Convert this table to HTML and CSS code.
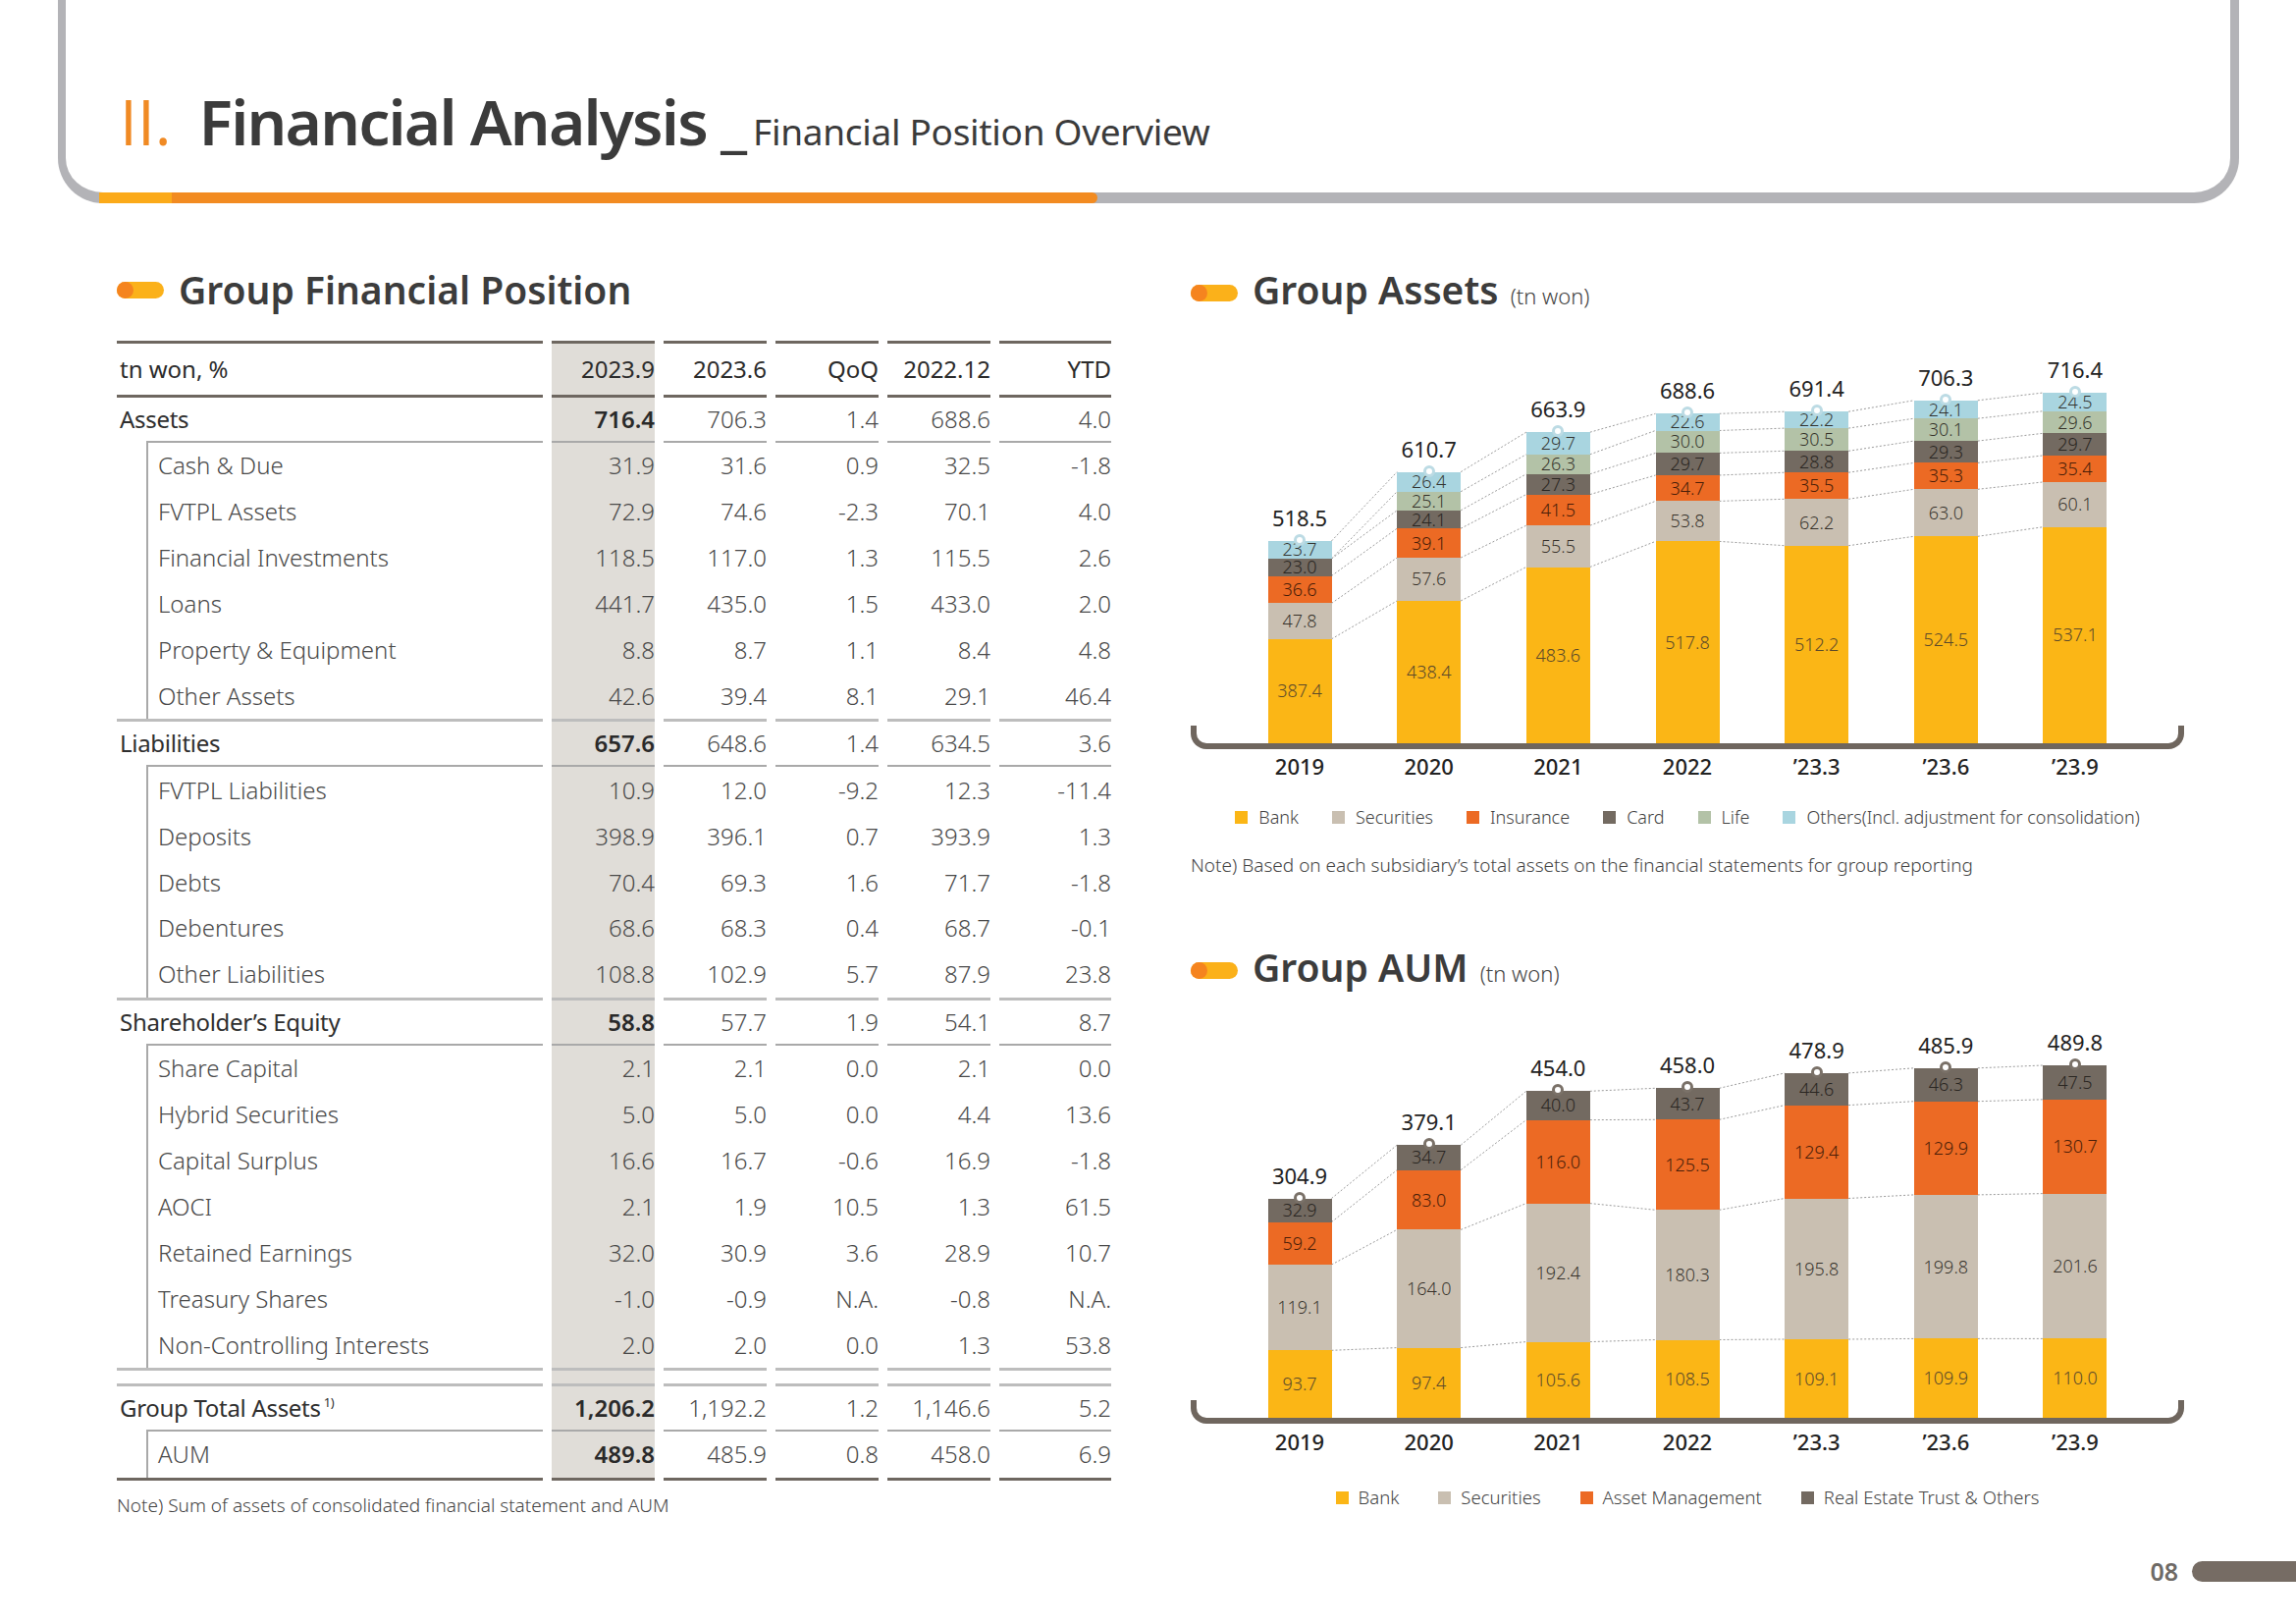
FILE: index.html
```html
<!DOCTYPE html>
<html lang="en">
<head>
<meta charset="utf-8">
<title>Financial Analysis - Financial Position Overview</title>
<link rel="stylesheet" href="styles.css">
</head>
<body>
<header class="frame">
  <h1 class="page-title"><span class="num">II.</span><span class="main">Financial Analysis</span><span class="sep">_</span><span class="sub">Financial Position Overview</span></h1>
  <div class="accent"></div>
</header>

<main class="content">
  <section class="col">
    <h2 class="sec"><span class="pill"></span><span>Group Financial Position</span></h2>
    <table class="fin">
      <colgroup><col class="c-lab"><col class="c-n"><col class="c-n"><col class="c-n"><col class="c-n"><col class="c-last"></colgroup>
      <thead>
        <tr><th class="lab">tn won, %</th><th class="hl">2023.9</th><th>2023.6</th><th>QoQ</th><th>2022.12</th><th>YTD</th></tr>
      </thead>
      <tbody>
        <tr class="major"><td class="lab">Assets</td><td class="hl b">716.4</td><td>706.3</td><td>1.4</td><td>688.6</td><td>4.0</td></tr>
        <tr class="sub first"><td class="lab">Cash &amp; Due</td><td class="hl">31.9</td><td>31.6</td><td>0.9</td><td>32.5</td><td>-1.8</td></tr>
        <tr class="sub"><td class="lab">FVTPL Assets</td><td class="hl">72.9</td><td>74.6</td><td>-2.3</td><td>70.1</td><td>4.0</td></tr>
        <tr class="sub"><td class="lab">Financial Investments</td><td class="hl">118.5</td><td>117.0</td><td>1.3</td><td>115.5</td><td>2.6</td></tr>
        <tr class="sub"><td class="lab">Loans</td><td class="hl">441.7</td><td>435.0</td><td>1.5</td><td>433.0</td><td>2.0</td></tr>
        <tr class="sub"><td class="lab">Property &amp; Equipment</td><td class="hl">8.8</td><td>8.7</td><td>1.1</td><td>8.4</td><td>4.8</td></tr>
        <tr class="sub"><td class="lab">Other Assets</td><td class="hl">42.6</td><td>39.4</td><td>8.1</td><td>29.1</td><td>46.4</td></tr>
        <tr class="major sep"><td class="lab">Liabilities</td><td class="hl b">657.6</td><td>648.6</td><td>1.4</td><td>634.5</td><td>3.6</td></tr>
        <tr class="sub first"><td class="lab">FVTPL Liabilities</td><td class="hl">10.9</td><td>12.0</td><td>-9.2</td><td>12.3</td><td>-11.4</td></tr>
        <tr class="sub"><td class="lab">Deposits</td><td class="hl">398.9</td><td>396.1</td><td>0.7</td><td>393.9</td><td>1.3</td></tr>
        <tr class="sub"><td class="lab">Debts</td><td class="hl">70.4</td><td>69.3</td><td>1.6</td><td>71.7</td><td>-1.8</td></tr>
        <tr class="sub"><td class="lab">Debentures</td><td class="hl">68.6</td><td>68.3</td><td>0.4</td><td>68.7</td><td>-0.1</td></tr>
        <tr class="sub"><td class="lab">Other Liabilities</td><td class="hl">108.8</td><td>102.9</td><td>5.7</td><td>87.9</td><td>23.8</td></tr>
        <tr class="major sep"><td class="lab">Shareholder’s Equity</td><td class="hl b">58.8</td><td>57.7</td><td>1.9</td><td>54.1</td><td>8.7</td></tr>
        <tr class="sub first"><td class="lab">Share Capital</td><td class="hl">2.1</td><td>2.1</td><td>0.0</td><td>2.1</td><td>0.0</td></tr>
        <tr class="sub"><td class="lab">Hybrid Securities</td><td class="hl">5.0</td><td>5.0</td><td>0.0</td><td>4.4</td><td>13.6</td></tr>
        <tr class="sub"><td class="lab">Capital Surplus</td><td class="hl">16.6</td><td>16.7</td><td>-0.6</td><td>16.9</td><td>-1.8</td></tr>
        <tr class="sub"><td class="lab">AOCI</td><td class="hl">2.1</td><td>1.9</td><td>10.5</td><td>1.3</td><td>61.5</td></tr>
        <tr class="sub"><td class="lab">Retained Earnings</td><td class="hl">32.0</td><td>30.9</td><td>3.6</td><td>28.9</td><td>10.7</td></tr>
        <tr class="sub"><td class="lab">Treasury Shares</td><td class="hl">-1.0</td><td>-0.9</td><td>N.A.</td><td>-0.8</td><td>N.A.</td></tr>
        <tr class="sub"><td class="lab">Non-Controlling Interests</td><td class="hl">2.0</td><td>2.0</td><td>0.0</td><td>1.3</td><td>53.8</td></tr>
        <tr class="gap"><td class="lab"></td><td class="hl"></td><td></td><td></td><td></td><td></td></tr>
        <tr class="major"><td class="lab">Group Total Assets<sup>1)</sup></td><td class="hl b">1,206.2</td><td>1,192.2</td><td>1.2</td><td>1,146.6</td><td>5.2</td></tr>
        <tr class="sub first last"><td class="lab">AUM</td><td class="hl b">489.8</td><td>485.9</td><td>0.8</td><td>458.0</td><td>6.9</td></tr>
      </tbody>
    </table>
    <p class="note">Note) Sum of assets of consolidated financial statement and AUM</p>
  </section>

  <section class="col">
    <h2 class="sec"><span class="pill"></span><span>Group Assets <small>(tn won)</small></span></h2>
    <div class="plot assets">
      <svg class="links" viewBox="0 0 1012 420" width="1012" height="420" aria-hidden="true">
        <path d="M143.5 313.8L210.2 274.9M143.5 277.4L210.2 231M143.5 249.5L210.2 201.2M143.5 232L210.2 182.8M143.5 232L210.2 163.7M143.5 213.9L210.2 143.6
                 M275.2 274.9L341.8 240.5M275.2 231L341.8 198.2M275.2 201.2L341.8 166.6M275.2 182.8L341.8 145.8M275.2 163.7L341.8 125.8M275.2 143.6L341.8 103.2
                 M406.8 240.5L473.5 214.4M406.8 198.2L473.5 173.4M406.8 166.6L473.5 147M406.8 145.8L473.5 124.4M406.8 125.8L473.5 101.5M406.8 103.2L473.5 84.3
                 M538.5 214.4L605.2 218.7M538.5 173.4L605.2 171.3M538.5 147L605.2 144.2M538.5 124.4L605.2 122.3M538.5 101.5L605.2 99.1M538.5 84.3L605.2 82.2
                 M670.2 218.7L736.8 209.3M670.2 171.3L736.8 161.3M670.2 144.2L736.8 134.4M670.2 122.3L736.8 112.1M670.2 99.1L736.8 89.2M670.2 82.2L736.8 70.8
                 M801.8 209.3L868.5 199.7M801.8 161.3L868.5 153.9M801.8 134.4L868.5 126.9M801.8 112.1L868.5 104.3M801.8 89.2L868.5 81.7M801.8 70.8L868.5 63"/>
      </svg>
      <div class="bars">
        <div class="bar"><span class="total">518.5</span><div class="stack">
          <div class="seg s-oth" style="height:18.1px">23.7</div>
          <div class="seg s-card" style="height:17.5px">23.0</div>
          <div class="seg s-ins" style="height:27.9px">36.6</div>
          <div class="seg s-sec" style="height:36.4px">47.8</div>
          <div class="seg s-bank" style="height:106.2px">387.4</div>
        </div></div>
        <div class="bar"><span class="total">610.7</span><div class="stack">
          <div class="seg s-oth" style="height:20.1px">26.4</div>
          <div class="seg s-life" style="height:19.1px">25.1</div>
          <div class="seg s-card" style="height:18.4px">24.1</div>
          <div class="seg s-ins" style="height:29.8px">39.1</div>
          <div class="seg s-sec" style="height:43.9px">57.6</div>
          <div class="seg s-bank" style="height:145.1px">438.4</div>
        </div></div>
        <div class="bar"><span class="total">663.9</span><div class="stack">
          <div class="seg s-oth" style="height:22.6px">29.7</div>
          <div class="seg s-life" style="height:20px">26.3</div>
          <div class="seg s-card" style="height:20.8px">27.3</div>
          <div class="seg s-ins" style="height:31.6px">41.5</div>
          <div class="seg s-sec" style="height:42.3px">55.5</div>
          <div class="seg s-bank" style="height:179.5px">483.6</div>
        </div></div>
        <div class="bar"><span class="total">688.6</span><div class="stack">
          <div class="seg s-oth" style="height:17.2px">22.6</div>
          <div class="seg s-life" style="height:22.9px">30.0</div>
          <div class="seg s-card" style="height:22.6px">29.7</div>
          <div class="seg s-ins" style="height:26.4px">34.7</div>
          <div class="seg s-sec" style="height:41px">53.8</div>
          <div class="seg s-bank" style="height:205.6px">517.8</div>
        </div></div>
        <div class="bar"><span class="total">691.4</span><div class="stack">
          <div class="seg s-oth" style="height:16.9px">22.2</div>
          <div class="seg s-life" style="height:23.2px">30.5</div>
          <div class="seg s-card" style="height:21.9px">28.8</div>
          <div class="seg s-ins" style="height:27.1px">35.5</div>
          <div class="seg s-sec" style="height:47.4px">62.2</div>
          <div class="seg s-bank" style="height:201.3px">512.2</div>
        </div></div>
        <div class="bar"><span class="total">706.3</span><div class="stack">
          <div class="seg s-oth" style="height:18.4px">24.1</div>
          <div class="seg s-life" style="height:22.9px">30.1</div>
          <div class="seg s-card" style="height:22.3px">29.3</div>
          <div class="seg s-ins" style="height:26.9px">35.3</div>
          <div class="seg s-sec" style="height:48px">63.0</div>
          <div class="seg s-bank" style="height:210.7px">524.5</div>
        </div></div>
        <div class="bar"><span class="total">716.4</span><div class="stack">
          <div class="seg s-oth" style="height:18.7px">24.5</div>
          <div class="seg s-life" style="height:22.6px">29.6</div>
          <div class="seg s-card" style="height:22.6px">29.7</div>
          <div class="seg s-ins" style="height:27px">35.4</div>
          <div class="seg s-sec" style="height:45.8px">60.1</div>
          <div class="seg s-bank" style="height:220.3px">537.1</div>
        </div></div>
      </div>
    </div>
    <div class="years"><span>2019</span><span>2020</span><span>2021</span><span>2022</span><span>’23.3</span><span>’23.6</span><span>’23.9</span></div>
    <div class="legend">
      <span><i class="s-bank"></i>Bank</span>
      <span><i class="s-sec"></i>Securities</span>
      <span><i class="s-ins"></i>Insurance</span>
      <span><i class="s-card"></i>Card</span>
      <span><i class="s-life"></i>Life</span>
      <span><i class="s-oth"></i>Others(Incl. adjustment for consolidation)</span>
    </div>
    <p class="chart-note">Note) Based on each subsidiary’s total assets on the financial statements for group reporting</p>

    <h2 class="sec aum-title"><span class="pill"></span><span>Group AUM <small>(tn won)</small></span></h2>
    <div class="plot aum">
      <svg class="links" viewBox="0 0 1012 420" width="1012" height="420" aria-hidden="true">
        <path d="M143.5 351.3L210.2 348.6M143.5 264L210.2 228.4M143.5 220.6L210.2 167.6M143.5 196.5L210.2 142.2
                 M275.2 348.6L341.8 342.6M275.2 228.4L341.8 201.6M275.2 167.6L341.8 116.6M275.2 142.2L341.8 87.3
                 M406.8 342.6L473.5 340.5M406.8 201.6L473.5 208.3M406.8 116.6L473.5 116.3M406.8 87.3L473.5 84.3
                 M538.5 340.5L605.2 340M538.5 208.3L605.2 196.5M538.5 116.3L605.2 101.6M538.5 84.3L605.2 68.9
                 M670.2 340L736.8 339.4M670.2 196.5L736.8 192.9M670.2 101.6L736.8 97.7M670.2 68.9L736.8 63.8
                 M801.8 339.4L868.5 339.4M801.8 192.9L868.5 191.6M801.8 97.7L868.5 95.8M801.8 63.8L868.5 61"/>
      </svg>
      <div class="bars">
        <div class="bar"><span class="total">304.9</span><div class="stack">
          <div class="seg s-card" style="height:24.1px">32.9</div>
          <div class="seg s-ins" style="height:43.4px">59.2</div>
          <div class="seg s-sec" style="height:87.3px">119.1</div>
          <div class="seg s-bank" style="height:68.7px">93.7</div>
        </div></div>
        <div class="bar"><span class="total">379.1</span><div class="stack">
          <div class="seg s-card" style="height:25.4px">34.7</div>
          <div class="seg s-ins" style="height:60.8px">83.0</div>
          <div class="seg s-sec" style="height:120.2px">164.0</div>
          <div class="seg s-bank" style="height:71.4px">97.4</div>
        </div></div>
        <div class="bar"><span class="total">454.0</span><div class="stack">
          <div class="seg s-card" style="height:29.3px">40.0</div>
          <div class="seg s-ins" style="height:85px">116.0</div>
          <div class="seg s-sec" style="height:141px">192.4</div>
          <div class="seg s-bank" style="height:77.4px">105.6</div>
        </div></div>
        <div class="bar"><span class="total">458.0</span><div class="stack">
          <div class="seg s-card" style="height:32px">43.7</div>
          <div class="seg s-ins" style="height:92px">125.5</div>
          <div class="seg s-sec" style="height:132.2px">180.3</div>
          <div class="seg s-bank" style="height:79.5px">108.5</div>
        </div></div>
        <div class="bar"><span class="total">478.9</span><div class="stack">
          <div class="seg s-card" style="height:32.7px">44.6</div>
          <div class="seg s-ins" style="height:94.9px">129.4</div>
          <div class="seg s-sec" style="height:143.5px">195.8</div>
          <div class="seg s-bank" style="height:80px">109.1</div>
        </div></div>
        <div class="bar"><span class="total">485.9</span><div class="stack">
          <div class="seg s-card" style="height:33.9px">46.3</div>
          <div class="seg s-ins" style="height:95.2px">129.9</div>
          <div class="seg s-sec" style="height:146.5px">199.8</div>
          <div class="seg s-bank" style="height:80.6px">109.9</div>
        </div></div>
        <div class="bar"><span class="total">489.8</span><div class="stack">
          <div class="seg s-card" style="height:34.8px">47.5</div>
          <div class="seg s-ins" style="height:95.8px">130.7</div>
          <div class="seg s-sec" style="height:147.8px">201.6</div>
          <div class="seg s-bank" style="height:80.6px">110.0</div>
        </div></div>
      </div>
    </div>
    <div class="years aum-years"><span>2019</span><span>2020</span><span>2021</span><span>2022</span><span>’23.3</span><span>’23.6</span><span>’23.9</span></div>
    <div class="legend aum-legend">
      <span><i class="s-bank"></i>Bank</span>
      <span><i class="s-sec"></i>Securities</span>
      <span><i class="s-ins"></i>Asset Management</span>
      <span><i class="s-card"></i>Real Estate Trust &amp; Others</span>
    </div>
  </section>
</main>

<footer class="folio"><span>08</span><i></i></footer>
</body>
</html>
```

FILE: styles.css
```css
:root {
  --ink: #3b3b3b;
  --rule-dark: #6e6760;
  --rule-mid: #a9a9a9;
  --rule-light: #bdbdbd;
  --shade: #e0ddd8;
  --bank: #fbb616;
  --sec: #c9bfb1;
  --ins: #ec6a24;
  --card: #736a61;
  --life: #b3c2a7;
  --oth: #a9d5e0;
}

html, body { margin: 0; padding: 0; }

body {
  width: 2339px;
  height: 1654px;
  overflow: hidden;
  background: #fff;
  font-family: "Noto Sans", "Open Sans", "DejaVu Sans", sans-serif;
  color: var(--ink);
  display: flex;
  flex-direction: column;
}

/* ---------- header frame ---------- */
.frame {
  flex: none;
  margin-left: 59px;
  width: 2222px;
  height: 207px;
  box-sizing: border-box;
  border-style: solid;
  border-color: #b3b3b7;
  border-width: 0 9px 11px 8px;
  border-radius: 0 0 46px 46px;
  position: relative;
  padding: 84px 0 0 55px;
}

.page-title {
  margin: 0;
  font-size: 64px;
  line-height: 80px;
  font-weight: 600;
  color: #3b3b3b;
  white-space: nowrap;
  letter-spacing: -1.8px;
}
.page-title .num {
  font-family: "Open Sans", "Noto Sans", sans-serif;
  color: #f08a24;
  font-weight: 400;
  letter-spacing: 0;
  margin-right: 28px;
}
.page-title .sep { margin: 0 6px 0 14px; letter-spacing: 0; }
.page-title .sub { font-size: 37px; font-weight: 400; letter-spacing: -0.3px; }

.accent {
  position: absolute;
  left: 34px;
  bottom: -11px;
  width: 1017px;
  height: 11px;
  border-radius: 0 6px 6px 0;
  background: linear-gradient(90deg, #fbaa1a 0 74px, #f28b21 74px);
}

/* ---------- content ---------- */
.content {
  display: flex;
  gap: 82px;
  padding-left: 119px;
  margin-top: 64px;
}
.col { width: 1012px; flex: none; }

.sec {
  display: flex;
  align-items: center;
  gap: 15px;
  margin: 0;
  font-size: 39px;
  line-height: 48px;
  font-weight: 600;
  color: #3c3c3c;
}
.sec small {
  font-size: 22px;
  font-weight: 300;
  color: #444;
  margin-left: 2px;
}
.pill {
  flex: none;
  position: relative;
  width: 48px;
  height: 17px;
  border-radius: 9px;
  background: #fbb11a;
}
.pill::before {
  content: "";
  position: absolute;
  left: 0;
  top: 0;
  width: 17px;
  height: 17px;
  border-radius: 50%;
  background: #f5841f;
}

/* ---------- table ---------- */
.fin {
  margin: 28px -9px 0;
  width: 1031px;
  border-collapse: separate;
  border-spacing: 9px 0;
  table-layout: fixed;
}
.fin .c-lab { width: 434px; }
.fin .c-n { width: 105px; }
.fin .c-last { width: 114px; }

.fin th,
.fin td {
  padding: 0;
  text-align: right;
  white-space: nowrap;
  font-size: 24px;
  line-height: 30px;
}
.fin th {
  height: 52px;
  border-top: 3px solid var(--rule-dark);
  border-bottom: 3px solid var(--rule-dark);
  font-weight: 400;
  color: #2b2b2b;
}
.fin td {
  height: 46.9px;
  font-weight: 300;
  color: #4a4a4a;
}
.fin .lab { text-align: left; padding-left: 3px; }
.fin .hl { background-color: var(--shade); }

.fin tr.major td { height: 44px; font-weight: 300; }
.fin tr.major td.lab { color: #2f2f2f; font-weight: 400; letter-spacing: -0.3px; }
.fin tr td.b { font-weight: 600; color: #2a2a2a; }

.fin tr.sub td.lab {
  padding-left: 42px;
  background: linear-gradient(var(--rule-mid), var(--rule-mid)) 30px 0 / 2px 100% no-repeat border-box;
}
.fin tr.first td { border-top: 2px solid var(--rule-mid); }
.fin tr.first td.lab {
  border-top-color: transparent;
  background:
    linear-gradient(var(--rule-mid), var(--rule-mid)) 30px 0 / calc(100% - 30px) 2px no-repeat border-box,
    linear-gradient(var(--rule-mid), var(--rule-mid)) 30px 0 / 2px 100% no-repeat border-box;
}
.fin tr.sep td { border-top: 3px solid var(--rule-light); }
.fin tr.gap td {
  height: 13px;
  border-top: 3px solid var(--rule-light);
  border-bottom: 3px solid var(--rule-light);
}
.fin tr.last td { border-bottom: 3px solid var(--rule-dark); }
.fin sup { font-size: 13px; vertical-align: 10px; margin-left: 3px; line-height: 0; }

.note {
  margin: 13px 0 0;
  font-size: 19px;
  line-height: 24px;
  font-weight: 300;
  color: #444;
}

/* ---------- charts ---------- */
.plot {
  position: relative;
  width: 1012px;
  height: 420px;
  margin-top: 12px;
}
.plot.aum { margin-top: 9px; }
.plot::after {
  content: "";
  position: absolute;
  left: 0;
  right: 0;
  bottom: -6px;
  height: 24px;
  box-sizing: border-box;
  border: 6px solid #6f665e;
  border-top: 0;
  border-radius: 0 0 16px 16px;
}
.links {
  position: absolute;
  left: 0;
  top: 0;
  fill: none;
  stroke: #9c9c9c;
  stroke-width: 1;
  stroke-dasharray: 2 2;
}
.bars {
  position: relative;
  height: 100%;
  display: grid;
  grid-template-columns: repeat(7, 65px);
  column-gap: 66.67px;
  justify-content: center;
  align-items: end;
}
.bar {
  display: flex;
  flex-direction: column;
  align-items: center;
}
.total {
  font-size: 22px;
  line-height: 24px;
  margin-bottom: 12px;
  color: #222;
  white-space: nowrap;
}
.stack {
  position: relative;
  width: 65px;
  display: flex;
  flex-direction: column;
}
.stack::before {
  content: "";
  position: absolute;
  left: 50%;
  top: -7px;
  width: 12px;
  height: 12px;
  margin-left: -6px;
  box-sizing: border-box;
  border-radius: 50%;
  border: 3px solid #bcdbe4;
  background: #fff;
  z-index: 1;
}
.aum .stack::before { border-color: #7a7168; }

.seg {
  flex: none;
  display: flex;
  align-items: center;
  justify-content: center;
  font-size: 18px;
  line-height: 15px;
  font-weight: 300;
  white-space: nowrap;
  color: rgba(35, 28, 22, 0.88);
}
.s-bank { background: var(--bank); }
.s-sec { background: var(--sec); }
.s-ins { background: var(--ins); }
.s-card { background: var(--card); }
.s-life { background: var(--life); }
.s-oth { background: var(--oth); }
.seg.s-bank { color: #5b4a2a; }
.seg.s-ins { color: #4a1e08; }
.seg.s-card { color: #2a2622; }

.years {
  display: grid;
  grid-template-columns: repeat(7, 65px);
  column-gap: 66.67px;
  justify-content: center;
  margin-top: 11px;
  font-size: 22px;
  line-height: 24px;
  font-weight: 500;
  color: #222;
  text-align: center;
  white-space: nowrap;
}
.years span { display: flex; justify-content: center; }
.aum-years { margin-top: 12px; }

.legend {
  display: flex;
  justify-content: center;
  gap: 34px;
  margin-top: 28px;
  font-size: 18px;
  line-height: 24px;
  font-weight: 300;
  color: #444;
}
.legend span { display: flex; align-items: center; gap: 11px; }
.legend i { width: 13px; height: 13px; flex: none; }
.aum-legend { margin-top: 33px; gap: 40px; font-size: 18.5px; }
.aum-legend span { gap: 10px; }

.chart-note {
  margin: 25px 0 0;
  font-size: 19px;
  line-height: 24px;
  font-weight: 300;
  color: #444;
}

.aum-title { margin-top: 68px; }

/* ---------- folio ---------- */
.folio {
  margin-top: auto;
  margin-bottom: 40px;
  display: flex;
  justify-content: flex-end;
  align-items: center;
  gap: 14px;
}
.folio span {
  font-size: 25px;
  line-height: 28px;
  font-weight: 600;
  color: #6e6a66;
}
.folio i {
  width: 106px;
  height: 21px;
  background: #766c64;
  border-radius: 11px 0 0 11px;
}
```
